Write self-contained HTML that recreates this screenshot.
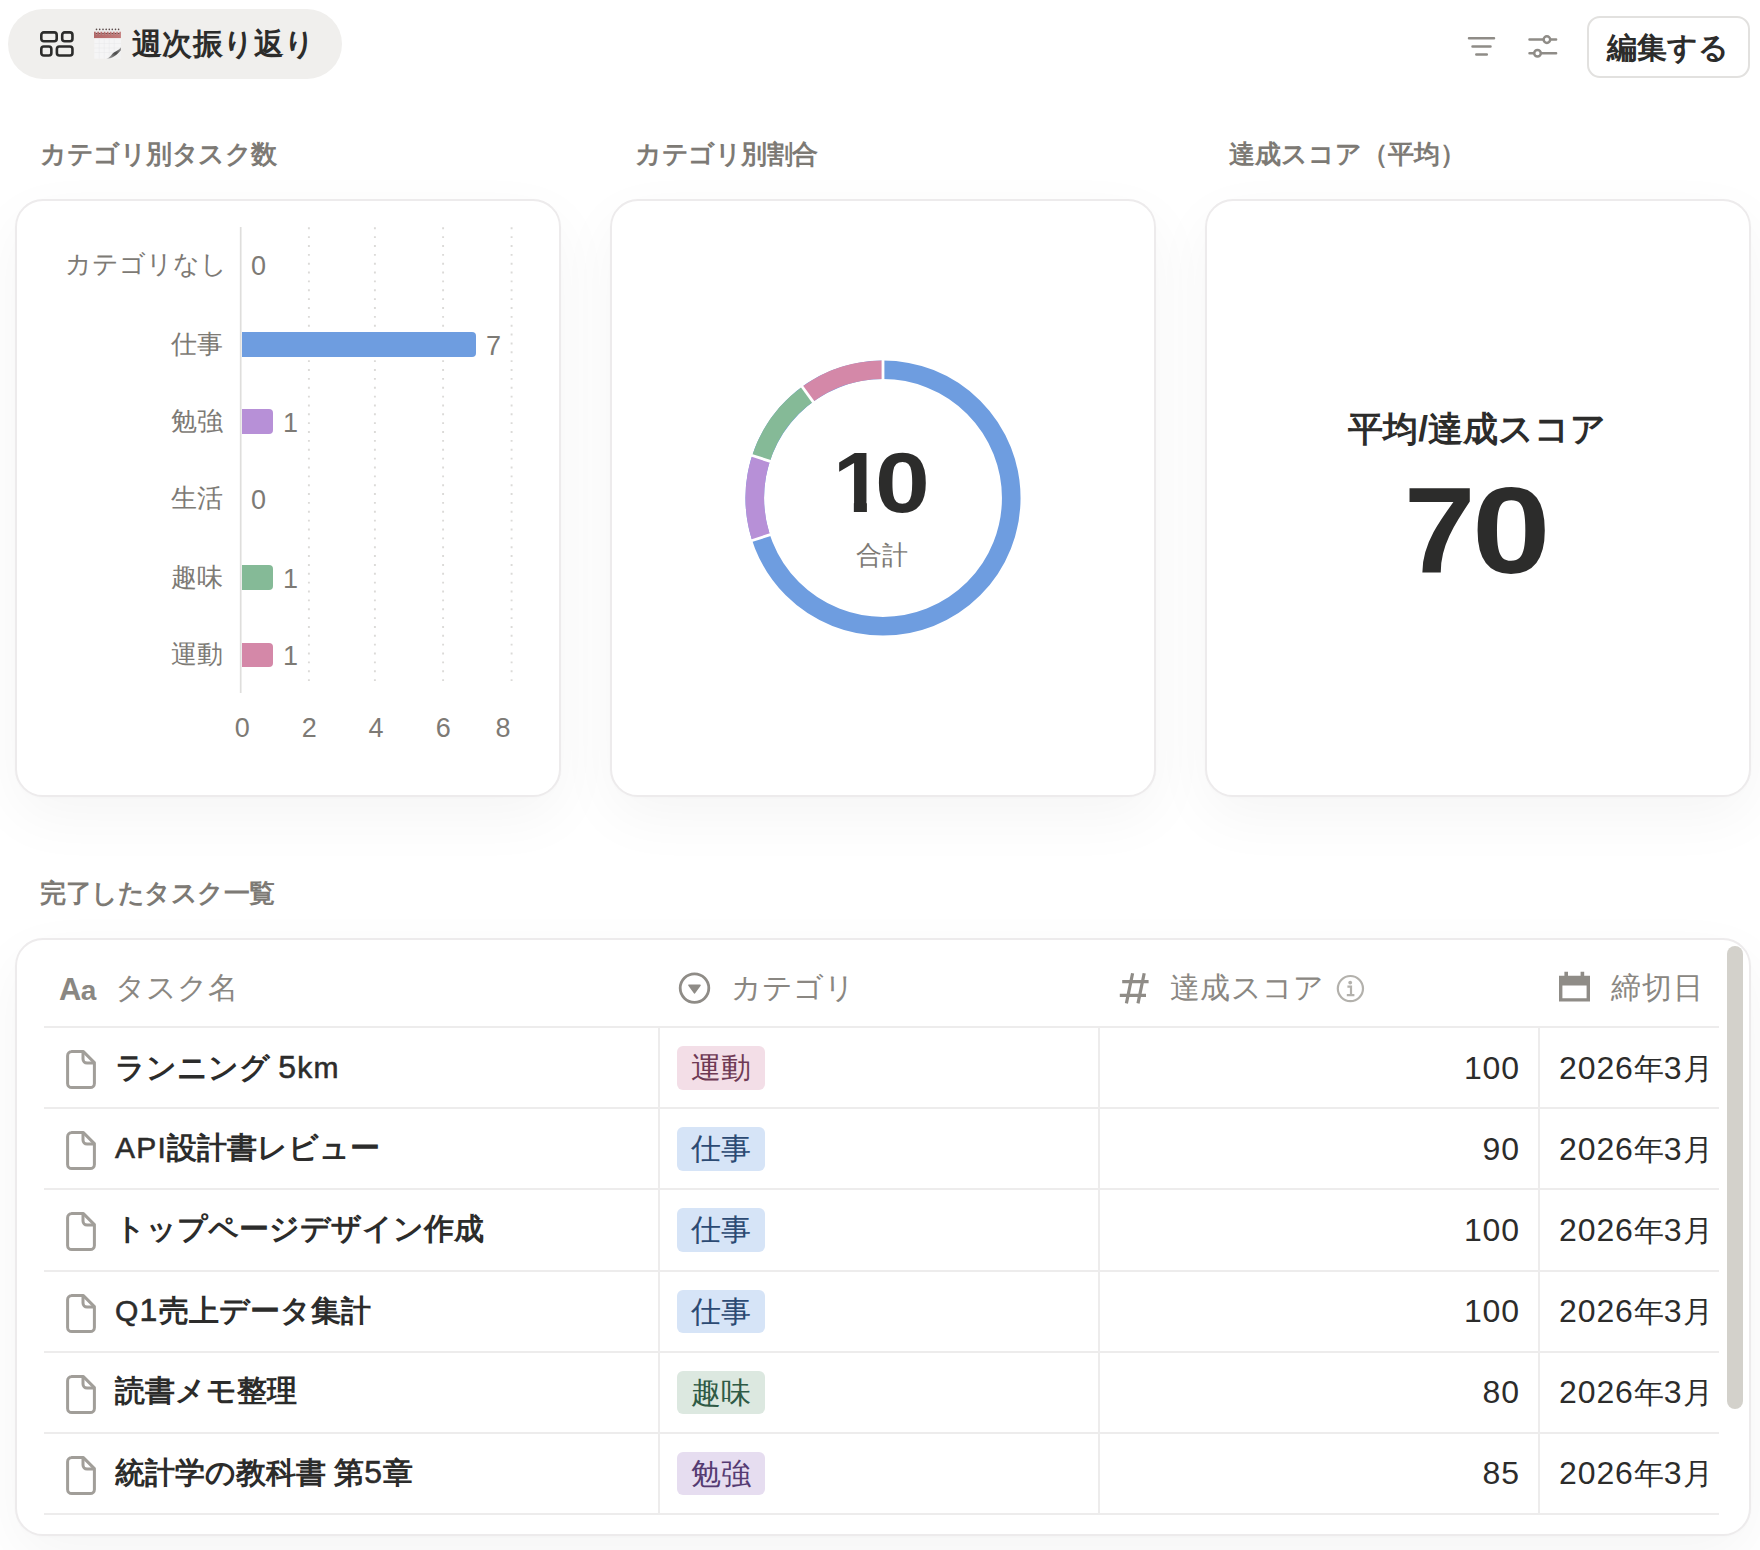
<!DOCTYPE html>
<html lang="ja">
<head>
<meta charset="utf-8">
<title>週次振り返り</title>
<style>
*{box-sizing:border-box;margin:0;padding:0}
html,body{width:1760px;height:1550px;overflow:hidden;background:#fff}
body{position:relative;font-family:"Liberation Sans",sans-serif;color:#2c2c2b;-webkit-font-smoothing:antialiased}
.abs{position:absolute;white-space:nowrap}
.t{position:absolute;white-space:nowrap;line-height:40px;height:40px}
/* header */
.pill{left:8px;top:9px;width:334px;height:70px;border-radius:35px;background:#f0efed}
.title{left:132px;top:24px;font-size:30px;font-weight:700;color:#2c2c2b;letter-spacing:.3px}
.btn{left:1587px;top:16px;width:163px;height:62px;border:2px solid #e2e1df;border-radius:13px;background:#fff}
.btntxt{left:1607px;top:28px;font-size:30px;font-weight:700;color:#2c2c2b}
/* section titles */
.sec{font-size:26px;font-weight:700;color:#7d7a75;letter-spacing:-.5px}
/* cards */
.card{position:absolute;background:#fff;border:2px solid #edebec;border-radius:28px;box-shadow:0 20px 60px rgba(0,0,0,.045),0 1px 3px rgba(0,0,0,.015)}
.g{color:#7d7a75}
.lbl{font-size:26px;color:#7d7a75;text-align:right;width:200px;left:23px}
.val{font-size:27px;color:#7d7a75}
.bar{position:absolute;left:241.5px;height:24.8px;border-radius:0 4px 4px 0}
.ax{font-size:27px;color:#7d7a75;width:40px;text-align:center}

.hd{font-size:30px;color:#8a8782}
.hl{left:44px;width:1674.6px;height:2px;background:#edecec}
.vl{top:1027px;width:2px;height:487px;background:#edecec}
.nm{font-size:30px;font-weight:700;color:#2c2c2b}
.tag{left:677px;width:88px;height:43.6px;line-height:43px;border-radius:6px;font-size:30px;text-align:center}
.pk{background:#f3dee7;color:#6f3a55}
.bl{background:#d6e4f7;color:#2c4a73}
.gr{background:#dce8e0;color:#2f5a45}
.pu{background:#e6ddf0;color:#553b72}
.num{left:1320px;width:200px;text-align:right;font-size:32px;letter-spacing:.9px;color:#2c2c2b}
.dt{left:1559px;width:159.6px;overflow:hidden;font-size:30px;color:#2c2c2b}
.dt i{font-style:normal;letter-spacing:1.6px}

.nm b{font-weight:400;-webkit-text-stroke:.55px #2c2c2b}
.nm .l{font-size:30px;letter-spacing:1.2px}
.nm .d{font-size:32px;letter-spacing:1.2px}
.dt b{font-weight:400;font-size:32px;letter-spacing:.9px}
.big{color:#2c2c2b;line-height:1;font-weight:700;white-space:nowrap}
.big span{display:inline-block;line-height:1;vertical-align:top;transform-origin:0 0}
</style>
</head>
<body>

<!-- ===== header ===== -->
<div class="abs pill"></div>
<svg class="abs" style="left:38px;top:29px" width="40" height="30" viewBox="0 0 40 30" fill="none" stroke="#2c2c2b" stroke-width="2.6">
  <rect x="3.3" y="3.4" width="15.4" height="8.9" rx="2.5"/>
  <rect x="24.2" y="3.4" width="10.25" height="8.9" rx="2.5"/>
  <rect x="3.3" y="17.45" width="10.05" height="9.1" rx="2.5"/>
  <rect x="18.9" y="17.45" width="15.55" height="9.1" rx="2.5"/>
</svg>
<!-- calendar emoji -->
<svg class="abs" style="left:93px;top:27px" width="30" height="33" viewBox="0 0 30 33">
  <defs>
    <linearGradient id="rb" x1="0" y1="0" x2="1" y2="0"><stop offset="0" stop-color="#b26868"/><stop offset="1" stop-color="#c37b7a"/></linearGradient>
    <linearGradient id="cu" x1="1" y1="0" x2="0" y2="1"><stop offset="0" stop-color="#9a9a9a"/><stop offset=".45" stop-color="#4a4a4a"/><stop offset="1" stop-color="#b5b5b5"/></linearGradient>
  </defs>
  <rect x="1.3" y="11" width="26.6" height="20.7" fill="#f5f5f6"/>
  <g stroke="#ebebec" stroke-width=".6"><path d="M1.3 16.5h26.6M1.3 21h26.6M1.3 25.5h26.6M6.2 12v19.7M11.2 12v19.7M16.2 12v19.7M21.2 12v19.7"/></g>
  <rect x="1" y="4.7" width="26.9" height="6.4" fill="url(#rb)"/>
  <g stroke="#e9e9e9" stroke-width="1.5" stroke-linecap="round"><path d="M3.5 2.6v4.4M6.7 2.6v4.4M10 2.6v4.4M13.2 2.6v4.4M16.3 2.6v4.4M19.3 2.6v4.4M22.5 2.6v4.4M25.6 2.6v4.4"/></g>
  <g fill="#5a4a4a"><circle cx="3.5" cy="2.4" r=".8"/><circle cx="6.7" cy="2.4" r=".8"/><circle cx="10" cy="2.4" r=".8"/><circle cx="13.2" cy="2.4" r=".8"/><circle cx="16.3" cy="2.4" r=".8"/><circle cx="19.3" cy="2.4" r=".8"/><circle cx="22.5" cy="2.4" r=".8"/><circle cx="25.6" cy="2.4" r=".8"/></g>
  <g fill="#7d4443"><circle cx="3.5" cy="6.6" r=".9"/><circle cx="6.7" cy="6.6" r=".9"/><circle cx="10" cy="6.6" r=".9"/><circle cx="13.2" cy="6.6" r=".9"/><circle cx="16.3" cy="6.6" r=".9"/><circle cx="19.3" cy="6.6" r=".9"/><circle cx="22.5" cy="6.6" r=".9"/><circle cx="25.6" cy="6.6" r=".9"/></g>
  <path d="M27.9 20.2C26 23.6 21.6 24 19 27.2C17.6 29 16 31.2 13.4 31.7H27.9z" fill="#f1f1f1"/>
  <path d="M27.9 20.2C26.2 23.4 21.8 24 19.2 27C17.7 28.8 16.2 31 13.4 31.7C18 31.9 23.6 28.4 27.9 23.2z" fill="url(#cu)"/>
</svg>
<div class="t title">週次振り返り</div>

<!-- filter icon -->
<svg class="abs" style="left:1462px;top:30px" width="40" height="34" viewBox="0 0 40 34" fill="none" stroke="#8f8c87" stroke-width="2.5" stroke-linecap="round">
  <path d="M7 8.2h25M10.5 16.5h18M14.3 24.4h10.5"/>
</svg>
<!-- sliders icon -->
<svg class="abs" style="left:1522px;top:30px" width="40" height="34" viewBox="0 0 40 34" fill="none" stroke="#8f8c87" stroke-width="2.5" stroke-linecap="round">
  <path d="M7.5 9.6h13.6M28.6 9.6h5.5"/><circle cx="24.9" cy="9.6" r="3.3"/>
  <path d="M7.5 23.2h4M19.3 23.2h14.8"/><circle cx="15.5" cy="23.2" r="3.3"/>
</svg>
<div class="abs btn"></div>
<div class="t btntxt">編集する</div>

<!-- ===== section titles ===== -->
<div class="t sec" style="left:40px;top:134px">カテゴリ別タスク数</div>
<div class="t sec" style="left:635px;top:134px">カテゴリ別割合</div>
<div class="t sec" style="left:1229px;top:134px;letter-spacing:0">達成スコア（平均）</div>

<!-- ===== card 1 : bar chart ===== -->
<div class="card" style="left:15px;top:199px;width:545.6px;height:597.6px"></div>
<svg class="abs" style="left:0;top:200px" width="600" height="520" viewBox="0 200 600 520" fill="none">
  <g stroke="#dbdad8" stroke-width="1.9" stroke-dasharray="1.9 6.96"><path d="M308.9 227.3v460M374.9 227.3v460M443.1 227.3v460M511.6 227.3v460"/></g>
  <path d="M240.7 227v466" stroke="#dfdedc" stroke-width="1.7"/>
</svg>
<div class="t lbl" style="top:243.75px;left:27px">カテゴリなし</div>
<div class="t lbl" style="top:323.65px">仕事</div>
<div class="t lbl" style="top:400.90px">勉強</div>
<div class="t lbl" style="top:477.75px">生活</div>
<div class="t lbl" style="top:557.00px">趣味</div>
<div class="t lbl" style="top:634.20px">運動</div>
<div class="bar" style="top:331.95px;width:234.3px;background:#6e9de0"></div>
<div class="bar" style="top:409.20px;width:31.7px;background:#b790d7"></div>
<div class="bar" style="top:565.30px;width:31.7px;background:#85ba97"></div>
<div class="bar" style="top:642.50px;width:31.7px;background:#d488a8"></div>
<div class="t val" style="left:251px;top:245.75px">0</div>
<div class="t val" style="left:486px;top:325.65px">7</div>
<div class="t val" style="left:283px;top:402.90px">1</div>
<div class="t val" style="left:251px;top:479.75px">0</div>
<div class="t val" style="left:283px;top:559.00px">1</div>
<div class="t val" style="left:283px;top:636.20px">1</div>
<div class="t ax" style="left:222.2px;top:707.6px">0</div>
<div class="t ax" style="left:289.3px;top:707.6px">2</div>
<div class="t ax" style="left:356.0px;top:707.6px">4</div>
<div class="t ax" style="left:423.3px;top:707.6px">6</div>
<div class="t ax" style="left:483.1px;top:707.6px">8</div>

<!-- ===== card 2 : donut ===== -->
<div class="card" style="left:610.2px;top:199px;width:545.6px;height:597.6px"></div>
<svg class="abs" style="left:732.5px;top:347.85px" width="300" height="300" viewBox="-150 -150 300 300" fill="none">
  <g stroke-width="18.6" transform="rotate(-90)">
    <circle r="128.25" stroke="#6e9de0"/>
    <circle r="128.25" stroke="#b790d7" stroke-dasharray="80.58 725.24" stroke-dashoffset="-564.07"/>
    <circle r="128.25" stroke="#85ba97" stroke-dasharray="80.58 725.24" stroke-dashoffset="-644.65"/>
    <circle r="128.25" stroke="#d488a8" stroke-dasharray="80.58 725.24" stroke-dashoffset="-725.24"/>
  </g>
  <g stroke="#fff" stroke-width="2.8">
    <path d="M0 -116V-140"/>
    <path d="M0 -116V-140" transform="rotate(252)"/>
    <path d="M0 -116V-140" transform="rotate(288)"/>
    <path d="M0 -116V-140" transform="rotate(324)"/>
  </g>
</svg>
<div class="abs big" style="left:832.9px;top:438.8px;font-size:86px"><span style="transform:scaleX(1.05);clip-path:polygon(0 0,100% 0,100% 72%,67.5% 72%,67.5% 100%,41.5% 100%,41.5% 72%,0 72%)">1</span><span style="margin-left:-5.93px;transform:scaleX(1.146)">0</span></div>
<div class="t g" style="left:782px;width:200px;text-align:center;top:535px;font-size:26px">合計</div>

<!-- ===== card 3 : number ===== -->
<div class="card" style="left:1205.4px;top:199px;width:545.6px;height:597.6px"></div>
<div class="t" style="left:1277px;width:400px;text-align:center;top:404px;height:50px;line-height:50px;font-size:35px;font-weight:700;color:#2c2c2b">平均/達成スコア</div>
<div class="abs big" style="left:1404.2px;top:469.5px;font-size:122px"><span style="transform:scaleX(1.053)">7</span><span style="margin-left:.4px;transform:scaleX(1.158)">0</span></div>

<!-- ===== table ===== -->
<div class="t sec" style="left:40px;top:873px">完了したタスク一覧</div>
<div class="card" style="left:15px;top:938px;width:1736px;height:597.6px"></div>
<div class="t hd" style="left:59px;top:969.5px;font-size:31px;font-weight:700;letter-spacing:-.6px">A<span style="font-size:28px">a</span></div>
<div class="t hd" style="left:115px;top:968px">タスク名</div>
<svg class="abs" style="left:674px;top:968px" width="40" height="40" viewBox="0 0 40 40"><circle cx="20.5" cy="20.1" r="14.3" fill="none" stroke="#8f8c87" stroke-width="2.8"/><path d="M15 17.2h11l-5.5 7.6z" fill="#8f8c87" stroke="#8f8c87" stroke-width="1.6" stroke-linejoin="round"/></svg>
<div class="t hd" style="left:731px;top:968px">カテゴリ</div>
<svg class="abs" style="left:1114px;top:968px" width="40" height="40" viewBox="0 0 40 40" fill="none" stroke="#8f8c87" stroke-width="3.2"><path d="M18.6 5.2L12.4 35.4M30.2 5.2L24 35.4M8.2 13.6H34.6M5.8 27.4H32"/></svg>
<div class="t hd" style="left:1170px;top:968px;letter-spacing:.3px">達成スコア</div>
<svg class="abs" style="left:1330px;top:968px" width="40" height="40" viewBox="0 0 40 40" fill="none"><circle cx="20.4" cy="20.6" r="12.6" stroke="#b3b1ac" stroke-width="2.2"/><circle cx="20.2" cy="14.6" r="1.9" fill="#b3b1ac"/><path d="M17.4 18.6h3.6v8M16.8 27.2h7.6" stroke="#b3b1ac" stroke-width="2.2"/></svg>
<svg class="abs" style="left:1554px;top:968px" width="40" height="40" viewBox="0 0 40 40"><path fill-rule="evenodd" fill="#8f8c87" d="M5 7.8h5.4V3.8h3.6v4h12.6V3.8h3.6v4H36v25.8H5zM8.4 17.4v12.8h24.2V17.4z"/></svg>
<div class="t hd" style="left:1611px;top:968px;letter-spacing:.8px">締切日</div>
<div class="abs hl" style="top:1026px"></div>
<div class="abs hl" style="top:1107px"></div>
<div class="abs hl" style="top:1188px"></div>
<div class="abs hl" style="top:1270px"></div>
<div class="abs hl" style="top:1351px"></div>
<div class="abs hl" style="top:1432px"></div>
<div class="abs hl" style="top:1513px"></div>
<div class="abs vl" style="left:658px"></div>
<div class="abs vl" style="left:1098px"></div>
<div class="abs vl" style="left:1538px"></div>
<svg class="abs" style="left:60px;top:1046.08px" width="42" height="48" viewBox="0 0 42 48" fill="none" stroke="#a19e99" stroke-width="3" stroke-linejoin="round"><path d="M11.6 5.6H23.4L34.4 16.6V37.4a4.2 4.2 0 0 1-4.2 4.2H11.8a4.2 4.2 0 0 1-4.2-4.2V9.8a4.2 4.2 0 0 1 4.2-4.2z"/><path d="M23 5.8V13a4 4 0 0 0 4 4h7.2"/></svg>
<div class="t nm" style="left:115px;top:1046.59px">ランニング <b class="d">5</b><b class="l">km</b></div>
<div class="abs tag pk" style="top:1045.99px">運動</div>
<div class="t num" style="top:1047.59px">100</div>
<div class="t dt" style="top:1047.59px"><b class="d">2026</b>年<b class="d">3</b>月<b class="d" style="margin-left:8px">16</b>日</div>
<svg class="abs" style="left:60px;top:1127.26px" width="42" height="48" viewBox="0 0 42 48" fill="none" stroke="#a19e99" stroke-width="3" stroke-linejoin="round"><path d="M11.6 5.6H23.4L34.4 16.6V37.4a4.2 4.2 0 0 1-4.2 4.2H11.8a4.2 4.2 0 0 1-4.2-4.2V9.8a4.2 4.2 0 0 1 4.2-4.2z"/><path d="M23 5.8V13a4 4 0 0 0 4 4h7.2"/></svg>
<div class="t nm" style="left:115px;top:1127.76px"><b class="l">API</b>設計書レビュー</div>
<div class="abs tag bl" style="top:1127.16px">仕事</div>
<div class="t num" style="top:1128.76px">90</div>
<div class="t dt" style="top:1128.76px"><b class="d">2026</b>年<b class="d">3</b>月<b class="d" style="margin-left:8px">16</b>日</div>
<svg class="abs" style="left:60px;top:1208.42px" width="42" height="48" viewBox="0 0 42 48" fill="none" stroke="#a19e99" stroke-width="3" stroke-linejoin="round"><path d="M11.6 5.6H23.4L34.4 16.6V37.4a4.2 4.2 0 0 1-4.2 4.2H11.8a4.2 4.2 0 0 1-4.2-4.2V9.8a4.2 4.2 0 0 1 4.2-4.2z"/><path d="M23 5.8V13a4 4 0 0 0 4 4h7.2"/></svg>
<div class="t nm" style="left:115px;top:1208.92px">トップページデザイン作成</div>
<div class="abs tag bl" style="top:1208.33px">仕事</div>
<div class="t num" style="top:1209.92px">100</div>
<div class="t dt" style="top:1209.92px"><b class="d">2026</b>年<b class="d">3</b>月<b class="d" style="margin-left:8px">16</b>日</div>
<svg class="abs" style="left:60px;top:1289.59px" width="42" height="48" viewBox="0 0 42 48" fill="none" stroke="#a19e99" stroke-width="3" stroke-linejoin="round"><path d="M11.6 5.6H23.4L34.4 16.6V37.4a4.2 4.2 0 0 1-4.2 4.2H11.8a4.2 4.2 0 0 1-4.2-4.2V9.8a4.2 4.2 0 0 1 4.2-4.2z"/><path d="M23 5.8V13a4 4 0 0 0 4 4h7.2"/></svg>
<div class="t nm" style="left:115px;top:1290.10px"><b class="l">Q</b><b class="d">1</b>売上データ集計</div>
<div class="abs tag bl" style="top:1289.50px">仕事</div>
<div class="t num" style="top:1291.10px">100</div>
<div class="t dt" style="top:1291.10px"><b class="d">2026</b>年<b class="d">3</b>月<b class="d" style="margin-left:8px">16</b>日</div>
<svg class="abs" style="left:60px;top:1370.76px" width="42" height="48" viewBox="0 0 42 48" fill="none" stroke="#a19e99" stroke-width="3" stroke-linejoin="round"><path d="M11.6 5.6H23.4L34.4 16.6V37.4a4.2 4.2 0 0 1-4.2 4.2H11.8a4.2 4.2 0 0 1-4.2-4.2V9.8a4.2 4.2 0 0 1 4.2-4.2z"/><path d="M23 5.8V13a4 4 0 0 0 4 4h7.2"/></svg>
<div class="t nm" style="left:115px;top:1371.26px">読書メモ整理</div>
<div class="abs tag gr" style="top:1370.66px">趣味</div>
<div class="t num" style="top:1372.26px">80</div>
<div class="t dt" style="top:1372.26px"><b class="d">2026</b>年<b class="d">3</b>月<b class="d" style="margin-left:8px">16</b>日</div>
<svg class="abs" style="left:60px;top:1451.93px" width="42" height="48" viewBox="0 0 42 48" fill="none" stroke="#a19e99" stroke-width="3" stroke-linejoin="round"><path d="M11.6 5.6H23.4L34.4 16.6V37.4a4.2 4.2 0 0 1-4.2 4.2H11.8a4.2 4.2 0 0 1-4.2-4.2V9.8a4.2 4.2 0 0 1 4.2-4.2z"/><path d="M23 5.8V13a4 4 0 0 0 4 4h7.2"/></svg>
<div class="t nm" style="left:115px;top:1452.43px">統計学の教科書 第<b class="d">5</b>章</div>
<div class="abs tag pu" style="top:1451.84px">勉強</div>
<div class="t num" style="top:1453.43px">85</div>
<div class="t dt" style="top:1453.43px"><b class="d">2026</b>年<b class="d">3</b>月<b class="d" style="margin-left:8px">16</b>日</div>
<div class="abs" style="left:1727px;top:946px;width:16px;height:463px;border-radius:8px;background:#d3d1cb"></div>
</body>
</html>
